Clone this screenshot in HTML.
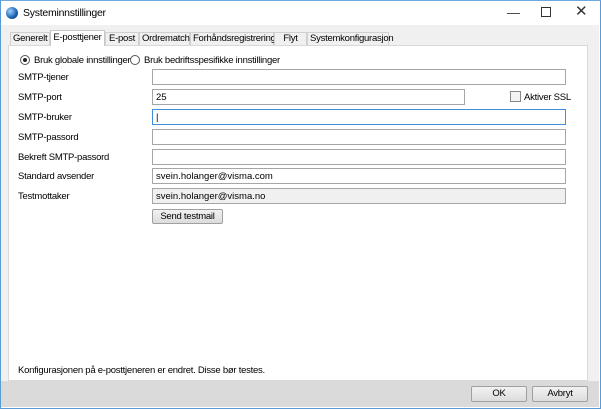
<!DOCTYPE html>
<html><head><style>
*{box-sizing:border-box;margin:0;padding:0}
body{width:601px;height:409px;position:relative;overflow:hidden;background:#fff;font-family:"Liberation Sans",sans-serif;font-size:9.5px;letter-spacing:-0.25px;color:#000}
div{white-space:nowrap}
.a{position:absolute}
.in{position:absolute;height:16px;border:1px solid #a6a6a6;background:#fff;padding-left:3px;line-height:15px;font-size:9.5px;letter-spacing:0}
.lb{position:absolute;left:18px}
.tab{position:absolute;top:32px;height:13px;border:1px solid #d0d0d0;border-bottom:none;background:#f0f0f0;line-height:12px;padding:0 2px;text-align:center}
.btn{position:absolute;border:1px solid #a0a0a0;background:linear-gradient(#f2f2f2,#dcdcdc);text-align:center;border-radius:2px}
</style></head><body>
<div class="a" style="left:0;top:0;width:601px;height:409px;border:1px solid #5a9bd5;border-top-color:#6fa8dc"></div>
<div class="a" style="left:1px;top:1px;width:599px;height:24px;background:#fff"></div>
<div class="a" style="left:6px;top:7px;width:12px;height:12px;border-radius:50%;background:radial-gradient(circle at 35% 35%,#9fd0ff,#1a5fb0 60%,#0a2f70)"></div>
<div class="a" style="left:23px;top:7px;font-size:10.5px">Systeminnstillinger</div>
<div class="a" style="left:507px;top:5px;font-size:13px;color:#333">—</div>
<div class="a" style="left:541px;top:7px;width:10px;height:10px;border:1px solid #333"></div>
<div class="a" style="left:575px;top:2px;font-size:15px;color:#333">✕</div>
<div class="a" style="left:1px;top:25px;width:598px;height:356px;background:#f0f0f0"></div>
<div class="a" style="left:8px;top:45px;width:580px;height:336px;background:#fff;border:1px solid #d9d9d9"></div>
<div class="tab" style="left:10px;width:40px">Generelt</div>
<div class="tab" style="left:50px;top:30px;height:16px;width:55px;background:#fff;border-color:#c8c8c8;line-height:13px">E-posttjener</div>
<div class="tab" style="left:105px;width:34px">E-post</div>
<div class="tab" style="left:139px;width:51px">Ordrematch</div>
<div class="tab" style="left:190px;width:84px">Forhåndsregistrering</div>
<div class="tab" style="left:274px;width:33px">Flyt</div>
<div class="tab" style="left:307px;width:82px">Systemkonfigurasjon</div>
<div class="a" style="left:20px;top:55px;width:10px;height:10px;border:1px solid #555;border-radius:50%;background:#fff"></div>
<div class="a" style="left:23px;top:58px;width:4px;height:4px;border-radius:50%;background:#222"></div>
<div class="a" style="left:34px;top:55px">Bruk globale innstillinger</div>
<div class="a" style="left:130px;top:55px;width:10px;height:10px;border:1px solid #555;border-radius:50%;background:#fff"></div>
<div class="a" style="left:144px;top:55px">Bruk bedriftsspesifikke innstillinger</div>
<div class="lb" style="top:72px">SMTP-tjener</div>
<div class="in" style="left:152px;top:69px;width:414px"></div>
<div class="lb" style="top:92px">SMTP-port</div>
<div class="in" style="left:152px;top:89px;width:313px">25</div>
<div class="a" style="left:510px;top:91px;width:11px;height:11px;border:1px solid #888;background:#f4f4f4"></div>
<div class="a" style="left:524px;top:92px">Aktiver SSL</div>
<div class="lb" style="top:112px">SMTP-bruker</div>
<div class="in" style="left:152px;top:109px;width:414px;border-color:#3c8fd8">|</div>
<div class="lb" style="top:132px">SMTP-passord</div>
<div class="in" style="left:152px;top:129px;width:414px"></div>
<div class="lb" style="top:152px">Bekreft SMTP-passord</div>
<div class="in" style="left:152px;top:149px;width:414px"></div>
<div class="lb" style="top:171px">Standard avsender</div>
<div class="in" style="left:152px;top:168px;width:414px">svein.holanger@visma.com</div>
<div class="lb" style="top:191px">Testmottaker</div>
<div class="in" style="left:152px;top:188px;width:414px;background:#f0f0f0">svein.holanger@visma.no</div>
<div class="btn" style="left:152px;top:209px;width:71px;height:15px;line-height:13px">Send testmail</div>
<div class="a" style="left:18px;top:365px">Konfigurasjonen på e-posttjeneren er endret. Disse bør testes.</div>
<div class="a" style="left:1px;top:381px;width:598px;height:26px;background:#dadada"></div>
<div class="btn" style="left:471px;top:386px;width:56px;height:16px;line-height:14px">OK</div>
<div class="btn" style="left:532px;top:386px;width:56px;height:16px;line-height:14px">Avbryt</div>
</body></html>
